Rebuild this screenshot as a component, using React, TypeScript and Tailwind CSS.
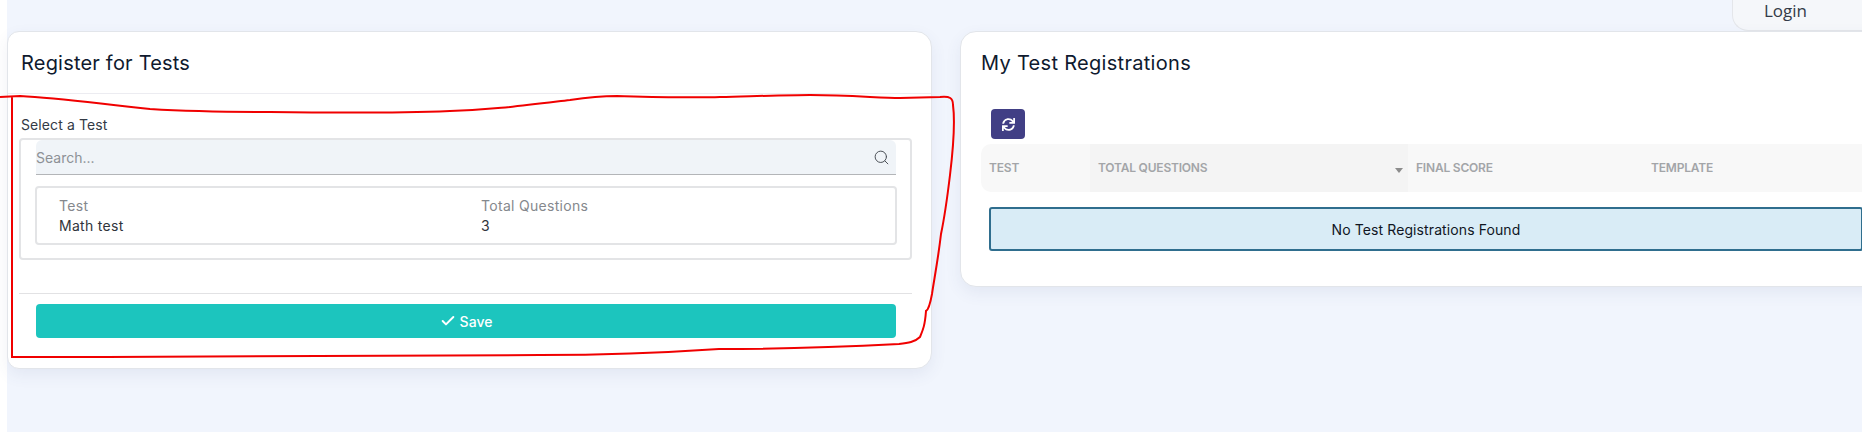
import { Check, Search } from "lucide-react";
import { FaSync } from "react-icons/fa";

const font = "font-['Inter','Liberation_Sans',sans-serif]";

function RegisterCard() {
  return (
    <div className="w-[925px] h-[338px] shrink-0 flex flex-col bg-white rounded-r-[16px] rounded-l-[12px] border border-[#e2e5ea] shadow-[0_6px_16px_rgba(60,80,130,0.08)]">
      <div className="h-[62px] shrink-0 flex items-center pl-[13px] border-b border-[#ececf1]">
        <h2 className="text-[20px] text-[#0f1a2e] tracking-[0.2px]">Register for Tests</h2>
      </div>
      <div className="flex-1 pl-[11px] pr-[19px]">
        <label className="block mt-[22px] pl-[2px] text-[14px] leading-[18px] tracking-[0.1px] text-[#333a45]">Select a Test</label>
        <div className="mt-[4px] h-[122px] border-2 border-[#e3e4e6] rounded-[4px] pl-[15px] pr-[14px]">
          <div className="h-[35px] flex items-center justify-between bg-[#f0f4f8] rounded-t-[6px] border-b border-[#b3b5b8]">
            <span className="text-[14px] text-[#8d9196]">Search...</span>
            <Search className="w-[17px] h-[17px] mr-[6px] text-[#4b5057]" strokeWidth={1.4} />
          </div>
          <div className="mt-[11px] mx-[-1px] h-[59px] border-2 border-[#e3e4e6] rounded-[4px] pl-[22px] pt-[8px] grid grid-cols-[422px_1fr] content-start text-[14px] leading-[20px] tracking-[0.3px]">
            <span className="text-[#85888d]">Test</span>
            <span className="text-[#85888d]">Total Questions</span>
            <span className="text-[#30343b]">Math test</span>
            <span className="text-[#30343b]">3</span>
          </div>
        </div>
        <div className="mt-[33px] border-t border-[#e2e2e4] pt-[10px] pl-[17px] pr-[16px]">
          <button className="w-full h-[34px] flex items-center justify-center gap-[4px] bg-[#1cc5be] rounded-[4px] text-[14px] font-medium text-white">
            <Check className="w-[16px] h-[16px]" strokeWidth={3} />
            Save
          </button>
        </div>
      </div>
    </div>
  );
}

function RegistrationsCard() {
  return (
    <div className="w-[930px] h-[256px] shrink-0 ml-[28px] bg-white rounded-[16px] border border-[#e2e5ea] shadow-[0_6px_16px_rgba(60,80,130,0.08)] pl-[20px]">
      <h2 className="h-[62px] flex items-center text-[20px] text-[#0f1a2e] tracking-[0.3px]">My Test Registrations</h2>
      <button className="ml-[10px] mt-[15px] w-[34px] h-[30px] flex items-center justify-center rounded-[4px] bg-[#413f85] text-white">
        <FaSync className="w-[13px] h-[13px]" />
      </button>
      <div className="mt-[5px] h-[48px] flex items-center bg-[#f8f8f8] rounded-l-[10px] text-[12px] font-semibold text-[#a3a5a8] uppercase tracking-[-0.2px]">
        <div className="w-[109px] pl-[8px]">Test</div>
        <div className="w-[318px] h-full flex items-center justify-between bg-[#f4f4f4] pl-[8px] pr-[5px]">
          Total Questions
          <span className="w-0 h-0 mt-[4px] border-x-[4px] border-x-transparent border-t-[5px] border-t-[#8c8c8c]" />
        </div>
        <div className="w-[243px] pl-[8px]">Final Score</div>
        <div>Template</div>
      </div>
      <div className="mt-[15px] ml-[8px] w-[874px] h-[44px] flex items-center justify-center bg-[#d9ecf6] border-2 border-[#2f6e8e] rounded-[3px] text-[14px] tracking-[0.1px] text-[#10161f]">
        No Test Registrations Found
      </div>
    </div>
  );
}

export default function App() {
  return (
    <div className={`relative w-[1862px] h-[434px] overflow-hidden bg-white ${font}`}>
      <div className="ml-[7px] h-[432px] bg-[#f1f5fd]">
        <div className="h-[31px] flex justify-end">
          <div className="w-[130px] h-[31px] pl-[31px] pb-[8px] flex items-center bg-[#f5f7fa] rounded-bl-[16px] border-l border-b border-[#e4e6ea] font-['Open_Sans',sans-serif] text-[17px] text-[#333b48]">
            Login
          </div>
        </div>
        <div className="flex items-start">
          <RegisterCard />
          <RegistrationsCard />
        </div>
      </div>
      {/* hand drawn marker round the form */}
      <svg className="absolute left-0 top-0 pointer-events-none" width="1862" height="434" fill="none">
        <path
          d="M0 97 L20 96 C60 98 100 104 150 109 C200 112 240 112 270 112 C340 113 400 113 450 111 C490 110 520 106 570 100 C590 97 605 96 617 96 C660 97 690 98 720 97 C760 96 790 95 810 95 C850 95 880 98 900 98 L940 97 C950 96 953 98 953 105 C955 120 953 150 950 175 C947 200 945 215 941 234 C938 260 934 280 932 294 C930 305 928 310 926 311 C925 325 923 330 920 337 C915 342 908 343 899 344 C840 347 780 349 719 349 C660 353 600 355 540 355 C400 357 200 357 12 357 L12 97"
          stroke="#f00000"
          strokeWidth="2"
        />
      </svg>
    </div>
  );
}
